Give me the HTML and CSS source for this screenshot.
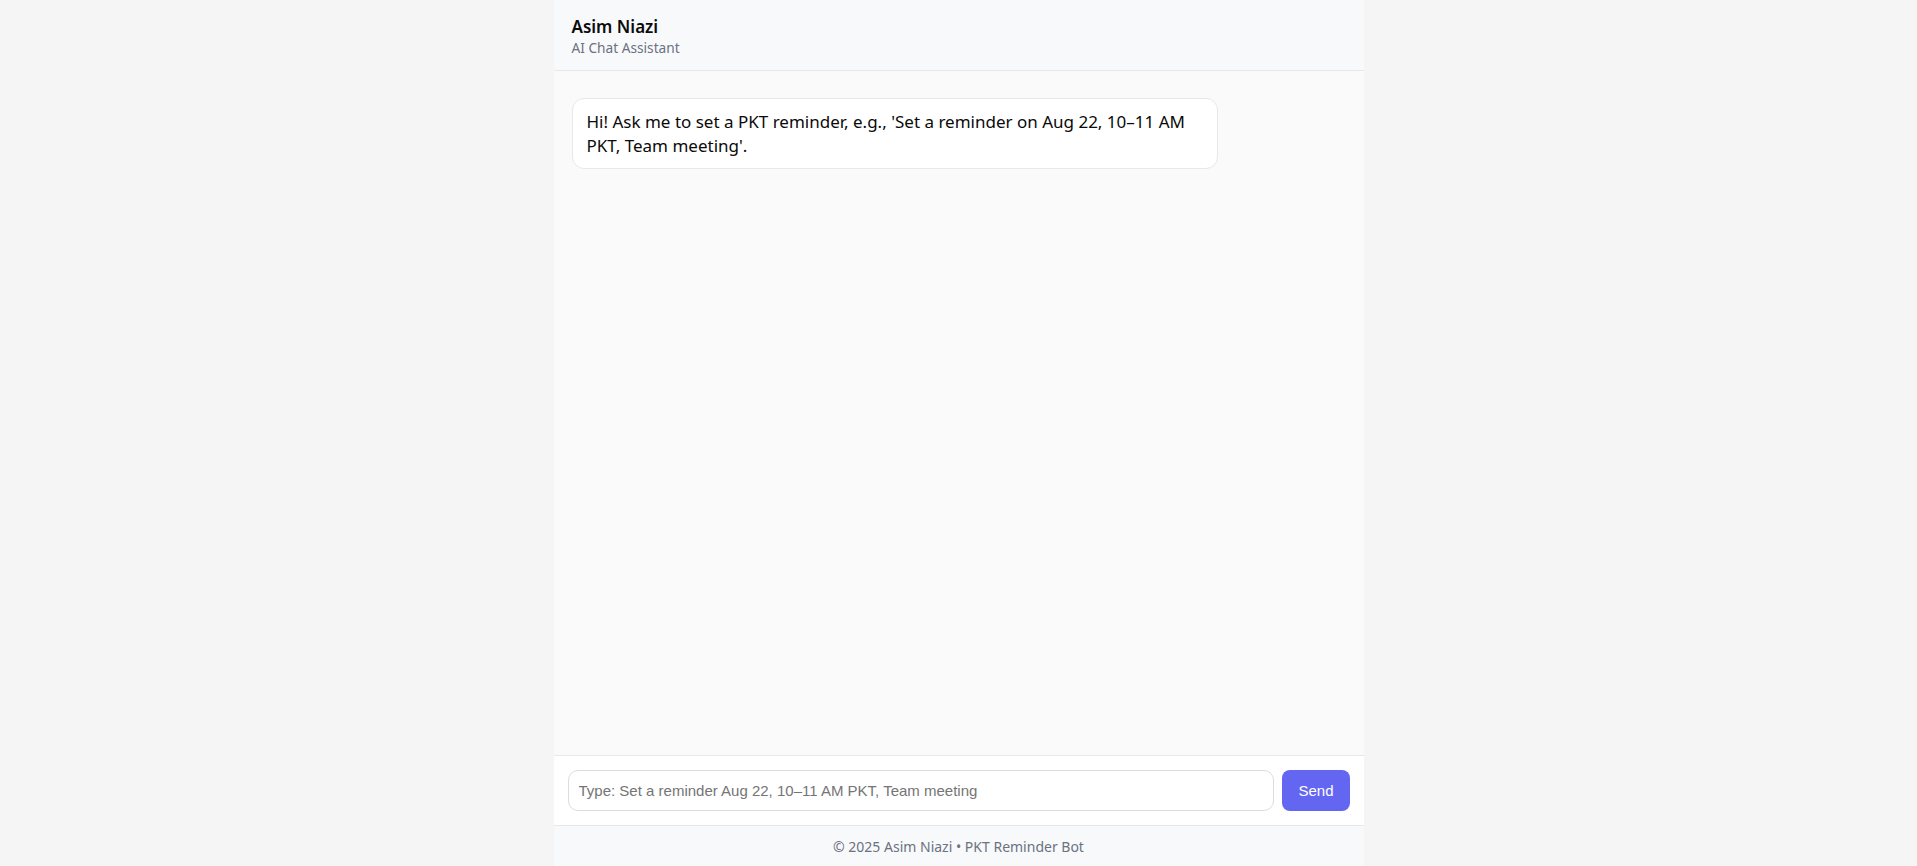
FILE: index.html
```html
<!DOCTYPE html>
<html lang="en">
<head>
<meta charset="utf-8">
<title>Asim Niazi — AI Chat Assistant</title>
<link rel="stylesheet" href="styles.css">
</head>
<body>
<div class="app">
  <header class="header">
    <div class="title">Asim Niazi</div>
    <div class="subtitle">AI Chat Assistant</div>
  </header>
  <main class="messages">
    <div class="bubble bot">Hi! Ask me to set a PKT reminder, e.g., 'Set a reminder on Aug 22, 10–11 AM PKT, Team meeting'.</div>
  </main>
  <form class="composer">
    <input class="input" type="text" placeholder="Type: Set a reminder Aug 22, 10–11 AM PKT, Team meeting" autofocus>
    <button class="send" type="button">Send</button>
  </form>
  <footer class="footer">© 2025 Asim Niazi • PKT Reminder Bot</footer>
</div>
</body>
</html>
```
FILE: styles.css
```css
* { box-sizing: border-box; }
html, body { height: 100%; }
body {
  margin: 0;
  background: #f5f5f5;
  font-family: "Noto Sans", "Open Sans", sans-serif;
  color: #111;
}
.app {
  max-width: 810px;
  height: 100vh;
  margin: 0 auto;
  display: flex;
  flex-direction: column;
  background: #fafafa;
}
.header {
  padding: 15px 18px 13px;
  background: #f8f9fb;
  border-bottom: 1px solid #e6e8eb;
}
.title {
  font-size: 17px;
  font-weight: 600;
  line-height: 23px;
  color: #0b0b0b;
}
.subtitle {
  font-size: 13.7px;
  line-height: 19px;
  color: #6b7280;
}
.messages {
  flex: 1;
  padding: 27px 18px 16px;
  display: flex;
  flex-direction: column;
  align-items: flex-start;
  gap: 12px;
  overflow: auto;
}
.bubble {
  max-width: 646px;
  padding: 11px 14px 10px;
  font-size: 17px;
  line-height: 24px;
  background: #fff;
  border: 1px solid #e8e8ea;
  border-radius: 12px;
  color: #0a0a0a;
}
.composer {
  margin: 0;
  display: flex;
  gap: 8px;
  padding: 14px;
  background: #fff;
  border-top: 1px solid #e6e8eb;
}
.input {
  flex: 1;
  height: 41px;
  padding: 0 10px;
  font-family: "Liberation Sans", Arial, sans-serif;
  font-size: 15px;
  border: 1px solid #dcdde0;
  border-radius: 10px;
  outline: none;
  background: #fff;
  color: #111;
}
.input::placeholder { color: #757575; }
.send {
  height: 41px;
  padding: 0 16px;
  font-family: "Liberation Sans", Arial, sans-serif;
  font-size: 15px;
  color: #fff;
  background: #6366f1;
  border: none;
  border-radius: 8px;
  cursor: pointer;
}
.footer {
  height: 41px;
  display: flex;
  align-items: center;
  justify-content: center;
  font-size: 14px;
  color: #6b7280;
  background: #f8f9fb;
  border-top: 1px solid #e6e8eb;
}
```
